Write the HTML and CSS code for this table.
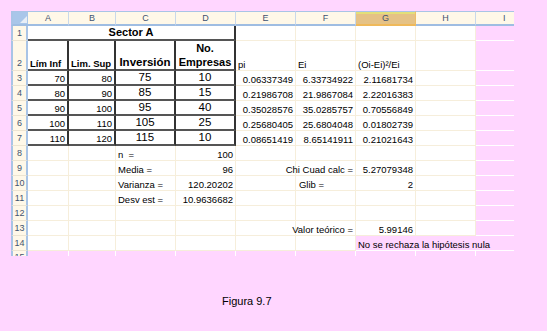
FILE: index.html
```html
<!DOCTYPE html>
<html lang="es">
<head>
<meta charset="utf-8">
<title>Figura 9.7</title>
<link rel="stylesheet" href="styles.css">
</head>
<body>
<div class="page">
  <div class="sheet">
    <!-- column headers -->
    <div class="corner"><svg class="tri" width="7" height="7" viewBox="0 0 7 7"><polygon points="7,0 7,7 0,7" fill="#e8eef6"/></svg></div>
    <div class="ch">A</div>
    <div class="ch">B</div>
    <div class="ch">C</div>
    <div class="ch">D</div>
    <div class="ch">E</div>
    <div class="ch">F</div>
    <div class="ch sel">G</div>
    <div class="ch">H</div>
    <div class="ch chi">I</div>

    <!-- row 1 -->
    <div class="rh">1</div>
    <div class="c span4 ctr b sector dr db"><span>Sector A</span></div>
    <div class="c"></div><div class="c"></div><div class="c"></div><div class="c"></div>
    <div class="c pk"></div>

    <!-- row 2 -->
    <div class="rh rh2">2</div>
    <div class="c b dr db"><span>Lím Inf</span></div>
    <div class="c b dr db"><span>Lim. Sup</span></div>
    <div class="c ctr b big dr db"><span>Inversión</span></div>
    <div class="c ctr b big dr db"><span class="two">No.<br>Empresas</span></div>
    <div class="c"><span>pi</span></div>
    <div class="c"><span>Ei</span></div>
    <div class="c"><span>(Oi-Ei)²/Ei</span></div>
    <div class="c"></div>
    <div class="c pk"></div>

    <!-- row 3 -->
    <div class="rh">3</div>
    <div class="c r dr db"><span>70</span></div>
    <div class="c r dr db"><span>80</span></div>
    <div class="c ctr big dr db"><span>75</span></div>
    <div class="c ctr big dr db"><span>10</span></div>
    <div class="c r"><span>0.06337349</span></div>
    <div class="c r"><span>6.33734922</span></div>
    <div class="c r"><span>2.11681734</span></div>
    <div class="c"></div>
    <div class="c pk"></div>

    <!-- row 4 -->
    <div class="rh">4</div>
    <div class="c r dr db"><span>80</span></div>
    <div class="c r dr db"><span>90</span></div>
    <div class="c ctr big dr db"><span>85</span></div>
    <div class="c ctr big dr db"><span>15</span></div>
    <div class="c r"><span>0.21986708</span></div>
    <div class="c r"><span>21.9867084</span></div>
    <div class="c r"><span>2.22016383</span></div>
    <div class="c"></div>
    <div class="c pk"></div>

    <!-- row 5 -->
    <div class="rh">5</div>
    <div class="c r dr db"><span>90</span></div>
    <div class="c r dr db"><span>100</span></div>
    <div class="c ctr big dr db"><span>95</span></div>
    <div class="c ctr big dr db"><span>40</span></div>
    <div class="c r"><span>0.35028576</span></div>
    <div class="c r"><span>35.0285757</span></div>
    <div class="c r"><span>0.70556849</span></div>
    <div class="c"></div>
    <div class="c pk"></div>

    <!-- row 6 -->
    <div class="rh">6</div>
    <div class="c r dr db"><span>100</span></div>
    <div class="c r dr db"><span>110</span></div>
    <div class="c ctr big dr db"><span>105</span></div>
    <div class="c ctr big dr db"><span>25</span></div>
    <div class="c r"><span>0.25680405</span></div>
    <div class="c r"><span>25.6804048</span></div>
    <div class="c r"><span>0.01802739</span></div>
    <div class="c"></div>
    <div class="c pk"></div>

    <!-- row 7 -->
    <div class="rh">7</div>
    <div class="c r dr db"><span>110</span></div>
    <div class="c r dr db"><span>120</span></div>
    <div class="c ctr big dr db"><span>115</span></div>
    <div class="c ctr big dr db"><span>10</span></div>
    <div class="c r"><span>0.08651419</span></div>
    <div class="c r"><span>8.65141911</span></div>
    <div class="c r"><span>0.21021643</span></div>
    <div class="c"></div>
    <div class="c pk"></div>

    <!-- row 8 -->
    <div class="rh">8</div>
    <div class="c"></div>
    <div class="c"></div>
    <div class="c"><span>n&nbsp;&nbsp;=</span></div>
    <div class="c r"><span>100</span></div>
    <div class="c"></div><div class="c"></div><div class="c"></div><div class="c"></div>
    <div class="c pk"></div>

    <!-- row 9 -->
    <div class="rh">9</div>
    <div class="c"></div>
    <div class="c"></div>
    <div class="c"><span>Media =</span></div>
    <div class="c r"><span>96</span></div>
    <div class="c"></div>
    <div class="c r"><span>Chi Cuad calc =</span></div>
    <div class="c r"><span>5.27079348</span></div>
    <div class="c"></div>
    <div class="c pk"></div>

    <!-- row 10 -->
    <div class="rh">10</div>
    <div class="c"></div>
    <div class="c"></div>
    <div class="c"><span>Varianza =</span></div>
    <div class="c r"><span>120.20202</span></div>
    <div class="c"></div>
    <div class="c r glib"><span>Glib =</span></div>
    <div class="c r"><span>2</span></div>
    <div class="c"></div>
    <div class="c pk"></div>

    <!-- row 11 -->
    <div class="rh">11</div>
    <div class="c"></div>
    <div class="c"></div>
    <div class="c"><span>Desv est =</span></div>
    <div class="c r"><span>10.9636682</span></div>
    <div class="c"></div><div class="c"></div><div class="c"></div><div class="c"></div>
    <div class="c pk"></div>

    <!-- row 12 -->
    <div class="rh">12</div>
    <div class="c"></div><div class="c"></div><div class="c"></div><div class="c"></div>
    <div class="c"></div><div class="c"></div><div class="c"></div><div class="c"></div>
    <div class="c pk"></div>

    <!-- row 13 -->
    <div class="rh">13</div>
    <div class="c"></div><div class="c"></div><div class="c"></div><div class="c"></div>
    <div class="c"></div>
    <div class="c r"><span>Valor teórico =</span></div>
    <div class="c r"><span>5.99146</span></div>
    <div class="c"></div>
    <div class="c pk"></div>

    <!-- row 14 -->
    <div class="rh">14</div>
    <div class="c"></div><div class="c"></div><div class="c"></div><div class="c"></div>
    <div class="c"></div><div class="c"></div>
    <div class="c span3 pk note"><span>No se rechaza la hipótesis nula</span></div>

    <!-- row 15 (cut off) -->
    <div class="rh rh15">15</div>
    <div class="c pk cut"></div><div class="c pk cut"></div><div class="c pk cut"></div><div class="c pk cut"></div>
    <div class="c pk cut"></div><div class="c pk cut"></div><div class="c pk cut"></div><div class="c pk cut"></div>
    <div class="c pk cut last"></div>
  </div>

  <div class="caption">Figura 9.7</div>
</div>
</body>
</html>
```

FILE: styles.css
```css
* {
  box-sizing: border-box;
  margin: 0;
  padding: 0;
}

body {
  background: #ffd6ff;
  font-family: "Liberation Sans", Arial, sans-serif;
  color: #000;
}

.page {
  padding: 11px 0 0 11px;
}

.sheet {
  display: grid;
  grid-template-columns: 17px 41px 47px 60px 60px 60px 60px 60px 60px 38px;
  grid-template-rows: 15px 15px 30px repeat(12, 15px) 5px;
  width: 503px;
}

/* headers */
.corner {
  background: #a9c6e9;
  border-top: 1px solid #a9c4e6;
  border-left: 2px solid #a9c4e6;
  border-bottom: 2px solid #9fbde2;
  display: flex;
  align-items: flex-end;
  justify-content: flex-end;
  padding: 0 1px 1px 0;
}

.tri {
  display: block;
}

.ch {
  background: #fff8e8;
  border-top: 1px solid #a9c4e6;
  border-bottom: 2px solid #9fbde2;
  border-right: 1px solid #c9d8ea;
  font-size: 9px;
  color: #3f5370;
  display: flex;
  align-items: center;
  justify-content: center;
  line-height: 10px;
}

.ch.sel {
  background: linear-gradient(#e3df79 0, #e3df79 2px, #e5c286 2px);
  border-right: 1px solid #eebe68;
  border-bottom-color: #efb95a;
}

.ch.chi {
  justify-content: flex-start;
  padding-left: 27px;
  border-right: none;
}

.rh {
  background: #fff8e8;
  border-left: 2px solid #a9c4e6;
  border-right: 2px solid #a9c4e6;
  border-bottom: 1px solid #ece4d2;
  font-size: 9px;
  color: #3f5370;
  display: flex;
  align-items: center;
  justify-content: center;
  line-height: 10px;
}

.rh2 {
  align-items: flex-end;
  padding-bottom: 2px;
}

.rh15 {
  align-items: flex-start;
  padding-top: 1px;
  overflow: hidden;
  border-bottom: none;
}

/* cells */
.c {
  background: #fff;
  border-right: 1px solid #f6eedb;
  border-bottom: 1px solid #f6eedb;
  font-size: 9.5px;
  line-height: 11px;
  display: flex;
  align-items: flex-end;
  justify-content: flex-start;
  padding: 0 2px;
  white-space: nowrap;
}

.c > span {
  display: block;
  white-space: nowrap;
}

.r {
  justify-content: flex-end;
}

.ctr {
  justify-content: center;
}

.b {
  font-weight: bold;
}

.big {
  font-size: 11.5px;
  line-height: 13px;
}

.sector {
  font-size: 11px;
  line-height: 13px;
}

.two {
  text-align: center;
  line-height: 14px;
  font-size: 11px;
}

.span4 {
  grid-column: span 4;
}

.span3 {
  grid-column: span 3;
}

.dr {
  border-right: 2px solid #333;
}

.db {
  border-bottom: 2px solid #555;
}

.glib {
  padding-right: 31px;
}

.pk {
  background: #ffd6ff;
  border-bottom: 1px solid #fff;
  border-right: none;
}

.note {
  border-right: none;
}

.cut {
  border-bottom: none;
  border-right: 1px solid #fff;
}

.cut.last {
  border-right: none;
}

.caption {
  margin-top: 38px;
  padding-left: 211px;
  font-size: 11px;
  line-height: 14px;
  color: #000;
}
```
